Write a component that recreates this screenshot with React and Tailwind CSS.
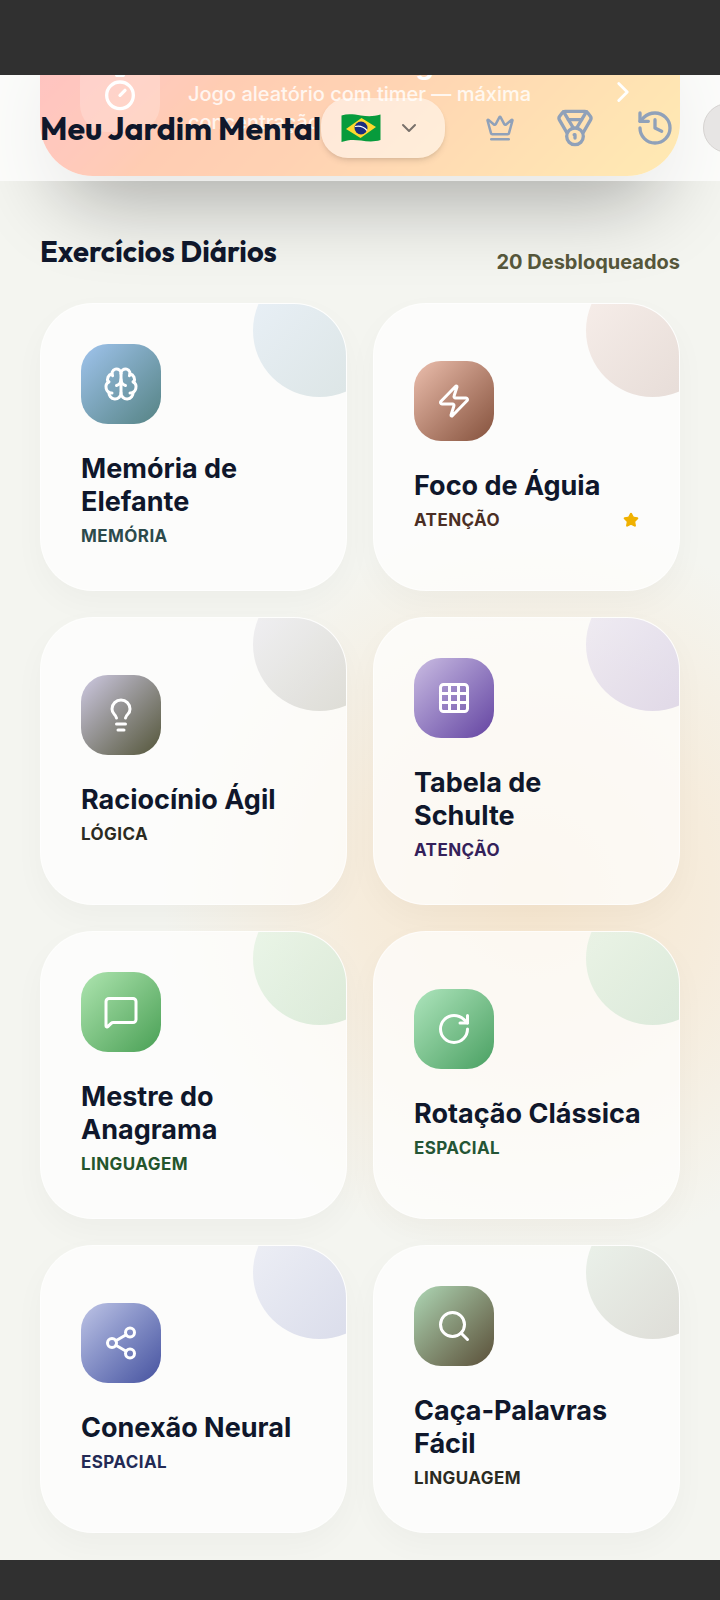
import {
  Brain,
  ChevronDown,
  ChevronRight,
  Crown,
  Grid3x3,
  History,
  Lightbulb,
  Medal,
  MessageSquare,
  RotateCw,
  Search,
  Share2,
  Star,
  Timer,
  Zap,
} from "lucide-react";

const EXERCISES = [
  {
    title: "Memória de Elefante",
    category: "Memória",
    icon: Brain,
    gradient: "from-[#a0c4ee] to-[#558384]",
    text: "text-[#2c4a4b]",
  },
  {
    title: "Foco de Águia",
    category: "Atenção",
    icon: Zap,
    gradient: "from-[#ecbfae] to-[#85523d]",
    text: "text-[#4b2e24]",
    starred: true,
  },
  {
    title: "Raciocínio Ágil",
    category: "Lógica",
    icon: Lightbulb,
    gradient: "from-[#cfcae4] to-[#55563a]",
    text: "text-[#2b2b22]",
  },
  {
    title: "Tabela de Schulte",
    category: "Atenção",
    icon: Grid3x3,
    gradient: "from-[#cbbde2] to-[#6543a1]",
    text: "text-[#34215a]",
  },
  {
    title: "Mestre do Anagrama",
    category: "Linguagem",
    icon: MessageSquare,
    gradient: "from-[#aee5b0] to-[#48a055]",
    text: "text-[#24552c]",
  },
  {
    title: "Rotação Clássica",
    category: "Espacial",
    icon: RotateCw,
    gradient: "from-[#aee5bd] to-[#48a062]",
    text: "text-[#245535]",
  },
  {
    title: "Conexão Neural",
    category: "Espacial",
    icon: Share2,
    gradient: "from-[#bfc5e6] to-[#47529f]",
    text: "text-[#232a55]",
  },
  {
    title: "Caça-Palavras Fácil",
    category: "Linguagem",
    icon: Search,
    gradient: "from-[#aed8b6] to-[#5a5039]",
    text: "text-[#2b2b22]",
  },
];

function BrazilFlag() {
  return (
    <svg viewBox="0 0 40 28" className="h-7 w-10 shrink-0" aria-hidden="true">
      <path
        d="M.5 1.500C7-.5 13 .5 20 1.500S33 2.500 39.500 .5V26c-6.500 2-13 1.500-19.500 .5S7 25.500 .5 28Z"
        fill="#079b3c"
      />
      <path d="M20.500 4 35 13 19.500 24 5 15Z" fill="#ffd92e" />
      <circle cx="20" cy="14" r="6.500" fill="#1b2d7f" />
      <path
        d="M14 12.500c4-1 9 .5 12 4"
        fill="none"
        stroke="#fff"
        strokeWidth="1.200"
      />
    </svg>
  );
}

function Header() {
  return (
    <header className="absolute inset-x-0 top-0 z-10 flex h-[106px] items-center overflow-hidden bg-white/70 pl-10">
      <h1 className="shrink-0 font-[Outfit,Lato,sans-serif] text-[32px] font-bold whitespace-nowrap text-slate-900">
        Meu Jardim Mental
      </h1>
      <button
        type="button"
        aria-label="Idioma"
        className="flex h-[60px] shrink-0 items-center gap-4 rounded-[27px] bg-white/50 pr-6 pl-5 shadow-md"
      >
        <BrazilFlag />
        <ChevronDown size={24} strokeWidth={2} className="text-stone-500" />
      </button>
      <nav className="ml-10 flex shrink-0 items-center gap-10 text-slate-400">
        <button type="button" aria-label="Premium">
          <Crown size={30} />
        </button>
        <button type="button" aria-label="Conquistas">
          <Medal size={40} />
        </button>
        <button type="button" aria-label="Histórico">
          <History size={40} />
        </button>
      </nav>
      <button
        type="button"
        aria-label="Perfil"
        className="ml-7 size-[50px] shrink-0 rounded-full border border-stone-300 bg-stone-200"
      />
    </header>
  );
}

function Challenge() {
  return (
    <a
      href="#desafio"
      className="-mt-[68px] flex items-center gap-7 rounded-[53px] bg-linear-135 from-red-500 via-orange-500 to-amber-400 p-10 text-white shadow-[0_42px_83px_-20px_rgba(0,0,0,0.32)]"
    >
      <span className="flex size-20 shrink-0 items-center justify-center rounded-[27px] bg-white/20">
        <Timer size={40} strokeWidth={2} />
      </span>
      <span className="flex-1">
        <span className="block text-[29px] leading-[33px] font-bold">
          Desafio Cronológico
        </span>
        <span className="block text-[20px] leading-7 font-medium text-white/80">
          Jogo aleatório com timer — máxima concentração
        </span>
      </span>
      <ChevronRight size={34} />
    </a>
  );
}

function ExerciseCard({ title, category, icon: Icon, gradient, text, starred }) {
  return (
    <button
      type="button"
      className="relative flex h-[288px] flex-col justify-center overflow-hidden rounded-[53px] border border-white/60 bg-white/70 py-10 pr-8 pl-10 text-left shadow-[0_12px_32px_rgba(0,0,0,0.03)]"
    >
      <span
        className={`absolute -top-10 -right-10 size-[133px] rounded-full bg-linear-135 opacity-20 ${gradient}`}
      />
      <span
        className={`mb-7 flex size-20 items-center justify-center rounded-[27px] bg-linear-135 text-white ${gradient}`}
      >
        <Icon size={36} />
      </span>
      <span className="text-[27px] leading-[33px] font-bold text-slate-900">
        {title}
      </span>
      <span className="mt-1 flex items-center justify-between self-stretch pr-2">
        <span
          className={`text-[17px] leading-7 font-bold tracking-wide uppercase ${text}`}
        >
          {category}
        </span>
        {starred && (
          <Star size={16} className="fill-yellow-500 text-yellow-500" />
        )}
      </span>
    </button>
  );
}

export default function App() {
  return (
    <div className="min-h-screen bg-[#303030] pt-[75px] pb-10 font-[Inter,sans-serif]">
      <main className="relative overflow-hidden bg-[#f4f5f0] bg-[radial-gradient(circle_at_74%_55%,#f6e6cf_0,#f6ecdc_180px,#f4f5f0_370px)] px-10 pb-[27px]">
        <Header />
        <Challenge />
        <section>
          <div className="mt-[58px] mb-[33px] flex items-end justify-between">
            <h2 className="font-[Outfit,Lato,sans-serif] text-[29px] leading-9 font-bold text-slate-900">
              Exercícios Diários
            </h2>
            <p className="text-[20px] leading-4 font-bold text-[#55563a]">
              20 Desbloqueados
            </p>
          </div>
          <div className="grid grid-cols-2 gap-[26px]">
            {EXERCISES.map((exercise) => (
              <ExerciseCard key={exercise.title} {...exercise} />
            ))}
          </div>
        </section>
      </main>
    </div>
  );
}
